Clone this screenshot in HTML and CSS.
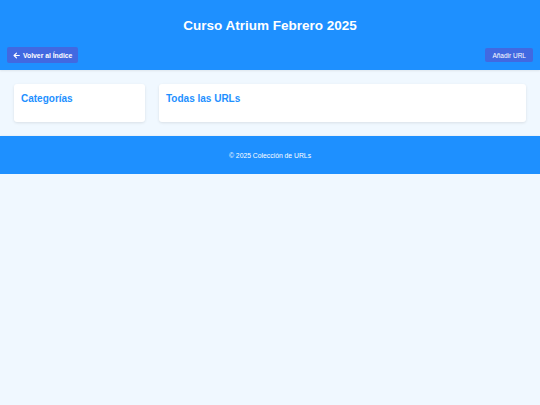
FILE: index.html
```html
<!DOCTYPE html>
<html lang="es">
<head>
<meta charset="utf-8">
<title>Curso Atrium Febrero 2025</title>
<link rel="stylesheet" href="styles.css">
</head>
<body>
<header class="site-header">
  <h1 class="site-title">Curso Atrium Febrero 2025</h1>
  <nav class="header-nav">
    <a class="btn btn-back" href="#">
      <svg class="btn-icon" viewBox="0 0 10 10" width="7" height="7" aria-hidden="true"><path d="M9 5H1.5M5 1.5L1.5 5L5 8.5" fill="none" stroke="#fff" stroke-width="1.6" stroke-linecap="round" stroke-linejoin="round"/></svg>
      Volver al Índice
    </a>
    <a class="btn btn-add" href="#">Añadir URL</a>
  </nav>
</header>
<main class="content">
  <section class="card card-categories">
    <h2 class="card-title">Categorías</h2>
  </section>
  <section class="card card-urls">
    <h2 class="card-title">Todas las URLs</h2>
  </section>
</main>
<footer class="site-footer">
  <p class="footer-text">© 2025 Colección de URLs</p>
</footer>
</body>
</html>
```

FILE: styles.css
```css
* { box-sizing: border-box; }

body {
  margin: 0;
  font-family: "Liberation Sans", Arial, sans-serif;
  background: #f0f8ff;
}

.site-header {
  background: #1e90ff;
  color: #fff;
  height: 70px;
  padding: 18px 7px 7px;
  box-shadow: 0 1px 2px rgba(0, 0, 0, 0.08);
}

.site-title {
  margin: 0;
  text-align: center;
  font-size: 13.5px;
  line-height: 16px;
  font-weight: bold;
}

.header-nav {
  margin-top: 13px;
  display: flex;
  justify-content: space-between;
  align-items: center;
}

.btn {
  display: inline-flex;
  align-items: center;
  gap: 3px;
  background: #4169e1;
  color: #fff;
  text-decoration: none;
  border-radius: 2px;
}

.btn-back {
  height: 16px;
  padding: 0 6px;
  font-size: 6.8px;
  font-weight: bold;
}

.btn-add {
  height: 14px;
  padding: 0 7px;
  font-size: 6.5px;
}

.btn-icon { display: block; }

.content {
  padding: 14px;
  display: grid;
  grid-template-columns: 131px 1fr;
  gap: 14px;
}

.card {
  background: #fff;
  border-radius: 3px;
  height: 38px;
  padding: 9px 7px 7px;
  box-shadow: 0 1px 3px rgba(0, 0, 0, 0.1);
}

.card-title {
  margin: 0;
  color: #1e90ff;
  font-size: 10px;
  line-height: 12px;
  font-weight: bold;
}

.site-footer {
  background: #1e90ff;
  color: #fff;
  height: 38px;
  display: flex;
  align-items: center;
  justify-content: center;
  box-shadow: 0 0 2px rgba(0, 0, 0, 0.08);
}

.footer-text {
  margin: 0;
  font-size: 6.8px;
}
```
